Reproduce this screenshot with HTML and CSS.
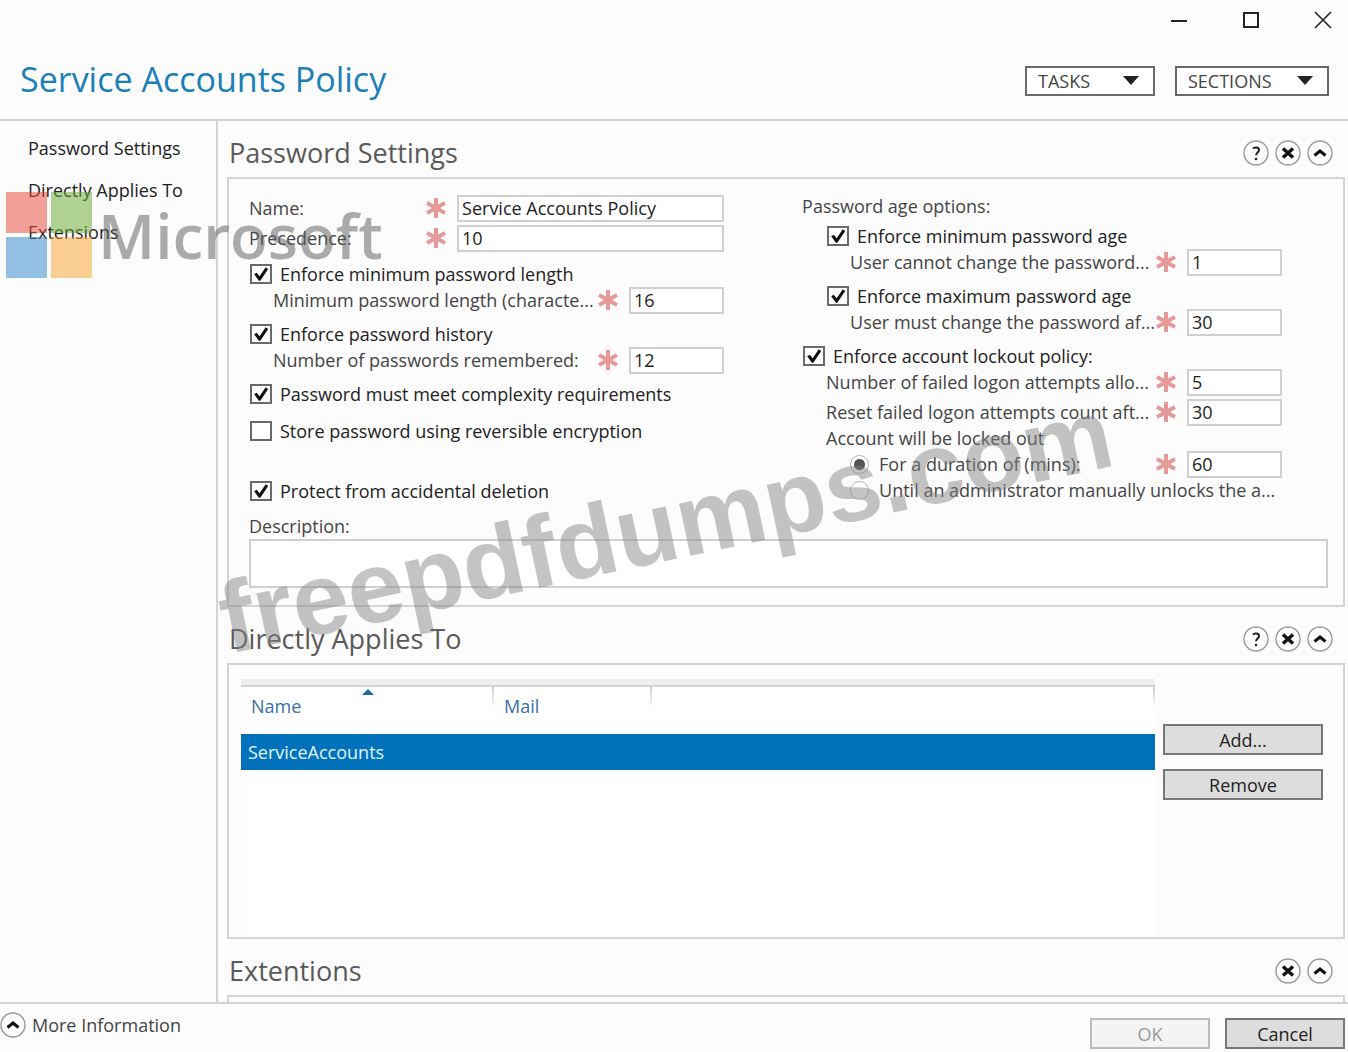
FILE: index.html
```html
<!DOCTYPE html>
<html lang="en">
<head>
  <meta charset="utf-8">
  <title>Service Accounts Policy</title>
  <link rel="stylesheet" href="styles.css">
</head>
<body>
  <!-- shared icons -->
  <svg class="sprite" aria-hidden="true">
    <symbol id="star" viewBox="0 0 22 22">
      <path d="M11 1v20M2 6l18 10M20 6L2 16" stroke="#e59999" stroke-width="4" fill="none"/>
    </symbol>
    <symbol id="help" viewBox="0 0 26 26">
      <circle cx="13" cy="13" r="12" fill="#fff" stroke="#999" stroke-width="1.4"/>
      <path d="M10 8.6c1-1.6 6-1.900 6 1.300 0 2.500-2.900 2.600-2.900 5.300" fill="none" stroke="#222" stroke-width="2"/>
      <circle cx="13" cy="19" r="1.300" fill="#222"/>
    </symbol>
    <symbol id="close" viewBox="0 0 26 26">
      <circle cx="13" cy="13" r="12" fill="#fff" stroke="#999" stroke-width="1.4"/>
      <path d="M8 8.500l10 9M18 8.500l-10 9" stroke="#111" stroke-width="3.400"/>
    </symbol>
    <symbol id="up" viewBox="0 0 26 26">
      <circle cx="13" cy="13" r="12" fill="#fff" stroke="#999" stroke-width="1.4"/>
      <path d="M7.500 15.500L13 11l5.500 4.500" fill="none" stroke="#111" stroke-width="3"/>
    </symbol>
  </svg>

  <div class="titlebar">
    <button aria-label="Minimize"><svg viewBox="0 0 18 18"><path d="M1 10h16" stroke="#222" stroke-width="2"/></svg></button>
    <button aria-label="Maximize"><svg viewBox="0 0 18 18"><path d="M2 2h14v14H2z" fill="none" stroke="#222" stroke-width="2"/></svg></button>
    <button aria-label="Close"><svg viewBox="0 0 18 18"><path d="M1 1l16 16M17 1L1 17" stroke="#222" stroke-width="1.600"/></svg></button>
  </div>

  <header class="header">
    <h1>Service Accounts Policy</h1>
    <button class="menu-button tasks" aria-haspopup="true">TASKS <span class="arrow"></span></button>
    <button class="menu-button sections" aria-haspopup="true">SECTIONS <span class="arrow"></span></button>
  </header>

  <div class="content">
    <nav class="sidebar">
      <a href="#settings">Password Settings</a>
      <a href="#applies">Directly Applies To</a>
      <a href="#extensions">Extensions</a>
    </nav>

    <main class="main">
      <section id="settings">
        <div class="section-head">
          <h2>Password Settings</h2>
          <button class="round" aria-label="Help"><svg><use href="#help"/></svg></button>
          <button class="round" aria-label="Close section"><svg><use href="#close"/></svg></button>
          <button class="round" aria-label="Collapse section"><svg><use href="#up"/></svg></button>
        </div>
        <div class="box settings-box">
          <div class="columns">
            <div class="left">
              <div class="row wide"><label for="name">Name:</label><svg class="star"><use href="#star"/></svg><input type="text" id="name" value="Service Accounts Policy"></div>
              <div class="row wide"><label for="precedence">Precedence:</label><svg class="star"><use href="#star"/></svg><input type="text" id="precedence" value="10"></div>
              <div class="group">
                <label class="check"><input type="checkbox" checked>Enforce minimum password length</label>
                <div class="row indent"><label for="min-length">Minimum password length (characte...</label><svg class="star"><use href="#star"/></svg><input type="text" id="min-length" value="16"></div>
              </div>
              <div class="group">
                <label class="check"><input type="checkbox" checked>Enforce password history</label>
                <div class="row indent"><label for="history">Number of passwords remembered:</label><svg class="star"><use href="#star"/></svg><input type="text" id="history" value="12"></div>
              </div>
              <div class="group options">
                <label class="check"><input type="checkbox" checked>Password must meet complexity requirements</label>
                <label class="check"><input type="checkbox">Store password using reversible encryption</label>
              </div>
              <label class="check protect"><input type="checkbox" checked>Protect from accidental deletion</label>
            </div>

            <div class="right">
              <p>Password age options:</p>
              <div class="group first indent">
                <label class="check"><input type="checkbox" checked>Enforce minimum password age</label>
                <div class="row indent"><label for="min-age">User cannot change the password...</label><svg class="star"><use href="#star"/></svg><input type="text" id="min-age" value="1"></div>
              </div>
              <div class="group indent">
                <label class="check"><input type="checkbox" checked>Enforce maximum password age</label>
                <div class="row indent"><label for="max-age">User must change the password af...</label><svg class="star"><use href="#star"/></svg><input type="text" id="max-age" value="30"></div>
              </div>
              <div class="group">
                <label class="check"><input type="checkbox" checked>Enforce account lockout policy:</label>
                <div class="indent lockout">
                  <div class="row"><label for="attempts">Number of failed logon attempts allo...</label><svg class="star"><use href="#star"/></svg><input type="text" id="attempts" value="5"></div>
                  <div class="row"><label for="reset">Reset failed logon attempts count aft...</label><svg class="star"><use href="#star"/></svg><input type="text" id="reset" value="30"></div>
                </div>
                <div class="indent">
                  <p>Account will be locked out</p>
                  <div class="row indent"><label class="check radio"><input type="radio" name="lock" checked>For a duration of (mins):</label><svg class="star"><use href="#star"/></svg><input type="text" aria-label="Duration in minutes" value="60"></div>
                  <div class="indent"><label class="check radio"><input type="radio" name="lock">Until an administrator manually unlocks the a...</label></div>
                </div>
              </div>
            </div>
          </div>
          <label class="description-label" for="description">Description:</label>
          <textarea id="description"></textarea>
        </div>
      </section>

      <section id="applies">
        <div class="section-head">
          <h2>Directly Applies To</h2>
          <button class="round" aria-label="Help"><svg><use href="#help"/></svg></button>
          <button class="round" aria-label="Close section"><svg><use href="#close"/></svg></button>
          <button class="round" aria-label="Collapse section"><svg><use href="#up"/></svg></button>
        </div>
        <div class="box applies-box">
          <div class="list">
            <table>
              <thead>
                <tr><th class="col-name">Name<span class="sort"></span></th><th class="col-mail">Mail</th><th></th></tr>
              </thead>
              <tbody>
                <tr class="selected"><td>ServiceAccounts</td><td></td><td></td></tr>
              </tbody>
            </table>
          </div>
          <div class="list-buttons">
            <button class="button">Add...</button>
            <button class="button">Remove</button>
          </div>
        </div>
      </section>

      <section id="extensions">
        <div class="section-head">
          <h2>Extentions</h2>
          <button class="round" aria-label="Close section"><svg><use href="#close"/></svg></button>
          <button class="round" aria-label="Collapse section"><svg><use href="#up"/></svg></button>
        </div>
        <div class="box extensions-box"></div>
      </section>
    </main>
  </div>

  <footer class="footer">
    <button class="more"><svg><use href="#up"/></svg>More Information</button>
    <button class="button ok" disabled>OK</button>
    <button class="button cancel">Cancel</button>
  </footer>

  <!-- watermarks -->
  <div class="brand">
    <svg viewBox="0 0 86 86">
      <path d="M0 0h41v41H0z" fill="#e74c3c"/>
      <path d="M45 0h41v41H45z" fill="#6aaa35"/>
      <path d="M0 45h41v41H0z" fill="#3288cc"/>
      <path d="M45 45h41v41H45z" fill="#fba637"/>
    </svg>
    <span>Microsoft</span>
  </div>
  <div class="watermark">freepdfdumps.com</div>
</body>
</html>
```

FILE: styles.css
```css
* {
  box-sizing: border-box;
}

body {
  margin: 0;
  height: 100vh;
  display: flex;
  flex-direction: column;
  position: relative;
  overflow: hidden;
  background-color: #fcfcfc;
  color: #444;
  font-family: "Open Sans", "Noto Sans", sans-serif;
  font-size: 18px;
  line-height: 26px;
}

h1, h2, p {
  margin: 0;
  font-weight: normal;
}

button, input, textarea {
  font: inherit;
  color: #222;
}

button {
  padding: 0;
  border: none;
  background: none;
}

.sprite {
  display: none;
}

/* Title bar */
.titlebar {
  display: flex;
  justify-content: flex-end;
  gap: 54px;
  height: 40px;
  padding-right: 16px;
}

.titlebar svg {
  display: block;
  width: 18px;
  height: 18px;
}

/* Header */
.header {
  display: flex;
  align-items: center;
  height: 81px;
  padding: 0 19px 0 20px;
  border-bottom: 2px solid #d4d4d4;
}

h1 {
  flex: 1;
  padding-bottom: 2px;
  font-size: 34px;
  line-height: 48px;
  color: #1b7fb8;
}

.menu-button {
  display: flex;
  align-items: center;
  justify-content: space-between;
  height: 30px;
  margin-top: 20px;
  margin-bottom: 18px;
  padding: 0 14px 0 11px;
  border: 2px solid #6a6a6a;
  background-color: #fff;
  color: #444;
}

.tasks {
  width: 130px;
  margin-right: 20px;
}

.sections {
  width: 154px;
}

.arrow {
  border: 8px solid transparent;
  border-top: 9px solid #222;
  border-bottom: none;
}

/* Layout */
.content {
  flex: 1;
  display: flex;
  min-height: 0;
}

.sidebar {
  width: 218px;
  padding: 14px 0 0 28px;
  border-right: 2px solid #d4d4d4;
}

.sidebar a {
  display: block;
  margin-bottom: 16px;
  color: #222;
  text-decoration: none;
  white-space: nowrap;
}

.main {
  flex: 1;
  min-width: 0;
  overflow: hidden;
  padding: 0 3px 0 9px;
}

.section-head {
  display: flex;
  align-items: center;
  gap: 6px;
  height: 56px;
  padding: 8px 12px 0 2px;
}

h2 {
  flex: 1;
  font-size: 27px;
  line-height: 40px;
  color: #5a5a5a;
}

.round svg, .more svg {
  display: block;
  width: 26px;
  height: 26px;
}

.box {
  border: 2px solid #d4d4d4;
}

/* Password settings */
.settings-box {
  padding: 14px 15px 17px 20px;
}

.columns {
  display: grid;
  grid-template-columns: 10fr 11fr;
  gap: 78px;
}

.right {
  padding-right: 46px;
}

.row {
  display: flex;
  align-items: center;
  height: 26px;
}

.row label {
  flex: 1;
  white-space: nowrap;
}

.wide {
  height: 30px;
}

.indent {
  padding-left: 24px;
}

.group {
  margin-top: 8px;
}

.group.first {
  margin-top: 4px;
}

.star {
  width: 22px;
  height: 22px;
  margin-right: 10px;
}

input[type="text"], textarea {
  border: 2px solid #d0d0d0;
  background-color: #fff;
}

input[type="text"] {
  width: 95px;
  height: 27px;
  padding: 0 3px;
}

.wide input[type="text"] {
  width: 267px;
}

.check {
  display: flex;
  align-items: center;
  height: 26px;
  gap: 8px;
  color: #222;
  white-space: nowrap;
}

.radio {
  gap: 10px;
  color: #444;
}

input[type="checkbox"] {
  appearance: none;
  width: 22px;
  height: 20px;
  margin: 0 0 0 1px;
  border: 2px solid #6a6a6a;
  background-color: #fff;
}

input[type="checkbox"]:checked::before {
  content: "";
  display: block;
  width: 18px;
  height: 16px;
  background-color: #111;
  clip-path: polygon(12% 52%, 26% 42%, 42% 64%, 76% 8%, 90% 18%, 46% 92%, 38% 92%);
}

input[type="radio"] {
  appearance: none;
  width: 19px;
  height: 19px;
  margin: 0;
  border: 1px solid #b5b5b5;
  border-radius: 50%;
  background-color: #fff;
}

input[type="radio"]:checked {
  background: radial-gradient(circle, #555 5px, #fff 6px);
}

.options {
  display: flex;
  flex-direction: column;
  gap: 11px;
}

.protect {
  margin-top: 34px;
}

.lockout {
  display: flex;
  flex-direction: column;
  gap: 4px;
}

.description-label {
  display: block;
  margin-top: 9px;
}

textarea {
  display: block;
  width: 100%;
  height: 49px;
  resize: none;
}

/* Directly applies to */
.applies-box {
  display: flex;
  gap: 8px;
  height: 276px;
  padding: 14px 20px 2px 12px;
}

.list {
  flex: 1;
  border-top: 6px solid #eee;
  background-color: #fff;
}

table {
  width: 100%;
  border-collapse: collapse;
  border-top: 2px solid #d4d4d4;
  table-layout: fixed;
}

th {
  position: relative;
  height: 48px;
  padding: 0 10px 10px;
  font-weight: normal;
  text-align: left;
  color: #3a6ea5;
  background: linear-gradient(#ccc, #fff) right top / 2px 22px no-repeat;
}

.col-name {
  width: 253px;
}

.col-mail {
  width: 158px;
}

.sort {
  position: absolute;
  top: 2px;
  left: 50%;
  transform: translateX(-50%);
  border: 6px solid transparent;
  border-top: none;
  border-bottom-color: #1b6ca5;
}

td {
  height: 36px;
  padding: 0 7px;
}

.selected {
  background-color: #0072bc;
  color: #e4f4ff;
}

.list-buttons {
  display: flex;
  flex-direction: column;
  gap: 14px;
  width: 160px;
  padding-top: 45px;
}

.button {
  height: 31px;
  border: 2px solid #777;
  background-color: #ddd;
}

.extensions-box {
  height: 60px;
}

/* Footer */
.footer {
  display: flex;
  height: 50px;
  padding: 0 3px 0 0;
  border-top: 2px solid #d4d4d4;
}

.more {
  display: flex;
  align-items: center;
  gap: 6px;
  height: 42px;
  margin-right: auto;
  color: #444;
}

.ok, .cancel {
  width: 120px;
  margin-top: 14px;
}

.ok {
  margin-right: 15px;
  border-color: #bbb;
  background-color: #f4f4f4;
  color: #999;
}

/* Watermarks */
.brand, .watermark {
  position: absolute;
  pointer-events: none;
  white-space: nowrap;
}

.brand {
  top: 192px;
  left: 6px;
  display: flex;
  align-items: center;
  gap: 6px;
  opacity: 0.52;
  color: #606060;
  font-size: 62px;
  font-weight: 600;
  line-height: 86px;
}

.brand svg {
  width: 86px;
  height: 86px;
}

.watermark {
  top: 562px;
  left: 228px;
  color: rgba(130, 130, 130, 0.47);
  font-family: "Liberation Sans", Arial, sans-serif;
  font-size: 101px;
  font-weight: bold;
  line-height: 114px;
  transform: rotate(-12deg);
  transform-origin: 0 92px;
}
```
